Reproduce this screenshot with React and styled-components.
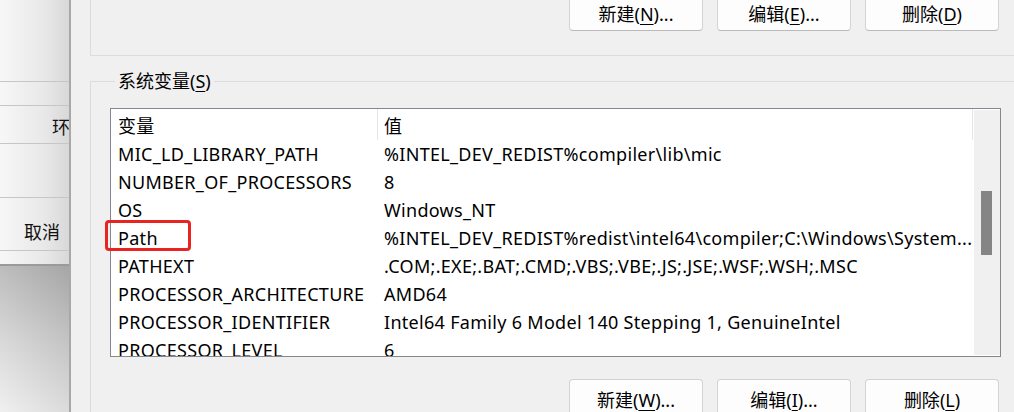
import React from 'react'
import styled, { createGlobalStyle } from 'styled-components'

const GlobalStyle = createGlobalStyle`
   html, body {
      margin: 0;
      padding: 0;
      background: #f0f0f0;
   }
   body {
      font-family: "Noto Sans", "Noto Sans CJK SC", sans-serif;
      font-size: 18px;
      color: #000;
   }
`

const variables = [
   { name: 'MIC_LD_LIBRARY_PATH', value: '%INTEL_DEV_REDIST%compiler\\lib\\mic' },
   { name: 'NUMBER_OF_PROCESSORS', value: '8' },
   { name: 'OS', value: 'Windows_NT' },
   { name: 'Path', value: '%INTEL_DEV_REDIST%redist\\intel64\\compiler;C:\\Windows\\System...' },
   { name: 'PATHEXT', value: '.COM;.EXE;.BAT;.CMD;.VBS;.VBE;.JS;.JSE;.WSF;.WSH;.MSC' },
   { name: 'PROCESSOR_ARCHITECTURE', value: 'AMD64' },
   { name: 'PROCESSOR_IDENTIFIER', value: 'Intel64 Family 6 Model 140 Stepping 1, GenuineIntel' },
   { name: 'PROCESSOR_LEVEL', value: '6' },
]

const Btn = ({ label, hotkey, more }) => (
   <Button>
      {label}(<u>{hotkey}</u>){more && '...'}
   </Button>
)

const App = () => {
   return (
      <>
         <GlobalStyle />
         <Screen>
            {/* the parent window, greyed out behind the dialog */}
            <BackWindow>
               <BackRow $h={82} />
               <BackRow $h={24} />
               <BackRow $h={38}><BackText $drop={3}>环境变量</BackText></BackRow>
               <BackRow $h={54} />
               <BackRow $h={53}><BackText $pad={24} $drop={14}>取消</BackText></BackRow>
               <BackRow $h={15} $dark />
               <BackShade />
            </BackWindow>
            <Edge />

            <Dialog>
               <UserGroup>
                  <ButtonRow $top={-7}>
                     <Btn label="新建" hotkey="N" more />
                     <Btn label="编辑" hotkey="E" more />
                     <Btn label="删除" hotkey="D" />
                  </ButtonRow>
               </UserGroup>

               <SysGroup>
                  <Legend>系统变量(<u>S</u>)</Legend>
                  <ListFrame>
                     <ListBox>
                        <ListBody>
                           <HeaderRow>
                              <NameCell>变量</NameCell>
                              <ValueCell>值</ValueCell>
                           </HeaderRow>
                           {variables.map(v => (
                              <Row key={v.name}>
                                 <NameCell>{v.name}</NameCell>
                                 <ValueCell>{v.value}</ValueCell>
                              </Row>
                           ))}
                        </ListBody>
                        <ScrollTrack>
                           <Thumb />
                        </ScrollTrack>
                     </ListBox>
                     {/* red frame drawn round the Path entry */}
                     <Marker />
                  </ListFrame>
                  <ButtonRow $top={22}>
                     <Btn label="新建" hotkey="W" more />
                     <Btn label="编辑" hotkey="I" more />
                     <Btn label="删除" hotkey="L" />
                  </ButtonRow>
               </SysGroup>
            </Dialog>
         </Screen>
      </>
   )
}

const Screen = styled.div`
   display: flex;
   width: 1014px;
   height: 412px;
   overflow: hidden;
`

const BackWindow = styled.div`
   flex: none;
   width: 69px;
   display: flex;
   flex-direction: column;
   overflow: hidden;
   background: linear-gradient(to right, #f7f7f7, #e8e8e8 65%, #d8d8d8);
`

const BackRow = styled.div`
   flex: none;
   height: ${p => p.$h}px;
   border-bottom: ${p => (p.$dark ? '2px solid #9a9a9a' : '1px solid #c6c6c6')};
   display: flex;
   align-items: center;
   box-sizing: border-box;
`

const BackText = styled.span`
   padding-left: ${p => p.$pad || 52}px;
   padding-top: ${p => p.$drop || 0}px;
   white-space: nowrap;
   color: #111;
`

const BackShade = styled.div`
   flex: 1;
   background:
      linear-gradient(to right, rgba(255, 255, 255, 0.12), rgba(0, 0, 0, 0.08)),
      linear-gradient(to bottom, #b4b4b4, #d6d6d6 55%, #eeeeee);
`

const Edge = styled.div`
   flex: none;
   width: 2px;
   background: #a8a8a8;
`

const Dialog = styled.div`
   flex: 1;
   min-width: 0;
   display: flex;
   flex-direction: column;
   padding-left: 19px;
   background: #f0f0f0;
`

const UserGroup = styled.div`
   flex: none;
   height: 56px;
   display: flex;
   flex-direction: column;
   box-sizing: border-box;
   border-left: 1px solid #dcdcdc;
   border-bottom: 1px solid #dcdcdc;
`

const ButtonRow = styled.div`
   display: flex;
   justify-content: flex-end;
   gap: 14px;
   margin-top: ${p => p.$top}px;
   padding-right: 15px;
`

const Button = styled.button`
   width: 134px;
   height: 38px;
   flex: none;
   font: inherit;
   color: #000;
   background: #fdfdfd;
   border: 1px solid #d3d3d3;
   border-bottom-color: #bababa;
   border-radius: 4px;
   padding: 2px 0 0;
   u {
      text-underline-offset: 3px;
   }
`

const SysGroup = styled.fieldset`
   margin: 13px 0 0;
   padding: 0 0 0 19px;
   border: 1px solid #dcdcdc;
   border-right: none;
   border-bottom: none;
   min-width: 0;
`

const Legend = styled.legend`
   padding: 0 3px;
   margin-left: 5px;
   line-height: 24px;
   u {
      text-underline-offset: 3px;
   }
`

const ListFrame = styled.div`
   position: relative;
   margin-top: 15px;
   margin-right: 13px;
`

const ListBox = styled.div`
   height: 249px;
   box-sizing: border-box;
   border: 1px solid #828790;
   background: #fff;
   display: flex;
   overflow: hidden;
   letter-spacing: 0.3px;
`

const ListBody = styled.div`
   flex: 1;
   min-width: 0;
   display: flex;
   flex-direction: column;
`

const Row = styled.div`
   display: flex;
   height: 28px;
   flex: none;
   white-space: nowrap;
`

const HeaderRow = styled(Row)`
   height: 31px;
   border-right: 1px solid #e5e5e5;
   & > div:last-child {
      border-left: 1px solid #e5e5e5;
      padding-left: 6px;
   }
`

const NameCell = styled.div`
   width: 266px;
   flex: none;
   display: flex;
   align-items: center;
   box-sizing: border-box;
   padding-left: 7px;
`

const ValueCell = styled.div`
   flex: 1;
   min-width: 0;
   display: flex;
   align-items: center;
   padding-left: 7px;
   padding-right: 4px;
   overflow: hidden;
`

const Marker = styled.div`
   position: absolute;
   left: -5px;
   top: 112px;
   width: 86px;
   height: 31px;
   box-sizing: border-box;
   border: 3px solid #e82320;
   border-radius: 4px;
`

const ScrollTrack = styled.div`
   width: 26px;
   flex: none;
   background: #f0f0f0;
   border: 1px solid #fff;
   border-right: none;
   position: relative;
`

const Thumb = styled.div`
   position: absolute;
   left: 7px;
   top: 81px;
   width: 11px;
   height: 64px;
   background: #858585;
`

export default App
